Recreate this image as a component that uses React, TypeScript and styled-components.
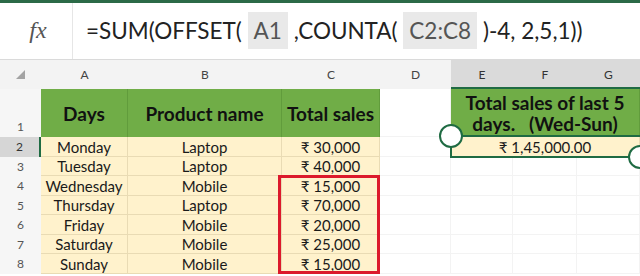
import React from "react";
import styled, { createGlobalStyle, css } from "styled-components";

const Global = createGlobalStyle`
  html, body { margin: 0; padding: 0; background: #ffffff; }
  body { width: 640px; height: 276px; overflow: hidden; font-family: Lato, "Noto Sans", "DejaVu Sans", sans-serif; }
`;

const Page = styled.div`
  width: 640px;
  height: 276px;
  display: flex;
  flex-direction: column;
  background: #fff;
`;

const TopStrip = styled.div`
  height: 3px;
  background: #2b6a47;
`;

const FormulaBar = styled.div`
  height: 56px;
  display: flex;
  border-bottom: 1px solid #dadada;
  background: #fff;
`;

const FxBox = styled.div`
  width: 73px;
  border-right: 1px solid #e6e6e6;
  display: flex;
  align-items: center;
  justify-content: center;
  font-family: "Liberation Serif", serif;
  font-style: italic;
  font-size: 24px;
  color: #555;
  padding: 0 0 2px 4px;
  box-sizing: border-box;
`;

const FormulaText = styled.div`
  flex: 1;
  display: flex;
  align-items: center;
  padding-left: 13px;
  font-size: 22.5px;
  color: #222;
  white-space: pre;
  padding-bottom: 2px;
`;

const Ref = styled.span`
  display: inline-flex;
  align-items: center;
  height: 37px;
  padding: 0 6px;
  background: #e9e9e9;
  color: #555;
`;

const Sheet = styled.div`
  position: relative;
  display: grid;
  grid-template-columns: 41px 87px 154px 98px 71px 62px 64px 63px;
  grid-template-rows: 29px 48px repeat(7, 19.5px);
`;

const Corner = styled.div`
  background: #f3f3f3;
  position: relative;
  display: flex;
  align-items: flex-end;
  padding: 0 0 10px 16px;
  box-sizing: border-box;
`;

const ColHead = styled.div<{ $sel?: boolean }>`
  display: flex;
  align-items: center;
  justify-content: center;
  font-size: 12px;
  color: #444;
  box-sizing: border-box;
  background: #f3f3f3;
  ${(p) =>
    p.$sel &&
    css`
      background: #dadada;
      border-bottom: 2px solid #1f6b43;
      padding-top: 2px;
      color: #333;
    `}
`;

const RowHead = styled.div<{ $sel?: boolean; $bottom?: boolean }>`
  display: flex;
  justify-content: center;
  align-items: ${(p) => (p.$bottom ? "flex-end" : "center")};
  padding-bottom: ${(p) => (p.$bottom ? "3px" : "0")};
  font-size: 12px;
  color: #555;
  background: #f6f6f6;
  box-sizing: border-box;
  ${(p) =>
    p.$sel &&
    css`
      background: #d6d6d6;
      border-right: 2px solid #1f6b43;
      color: #333;
    `}
`;

type Kind = "head" | "data" | "blank";

const Cell = styled.div<{ $kind: Kind; $span?: number }>`
  box-sizing: border-box;
  display: flex;
  align-items: center;
  justify-content: center;
  text-align: center;
  white-space: pre;
  grid-column: span ${(p) => p.$span ?? 1};
  ${(p) =>
    p.$kind === "head" &&
    css`
      background: #70ad47;
      border-right: 1px solid #619c3c;
      font-weight: 700;
      font-size: 19px;
      line-height: 21px;
      color: #111;
    `}
  ${(p) =>
    p.$kind === "data" &&
    css`
      background: #fff2cc;
      border-right: 1px solid #e9dbb4;
      border-bottom: 1px solid #e9dbb4;
      font-size: 15px;
      color: #1a1a1a;
      padding-top: 1px;
    `}
  ${(p) =>
    p.$kind === "blank" &&
    css`
      background: #fff;
      border-right: 1px solid #f3f3f3;
      border-bottom: 1px solid #f3f3f3;
    `}
`;

const RedBox = styled.div`
  position: absolute;
  left: 278px;
  top: 114.5px;
  width: 102px;
  height: 99px;
  border: 3px solid #dc1a2c;
  box-sizing: border-box;
  pointer-events: none;
`;

const Selection = styled.div`
  position: absolute;
  left: 450px;
  top: 75px;
  width: 200px;
  height: 23px;
  border: 2px solid #1f6b43;
  box-sizing: border-box;
`;

const Handle = styled.div<{ $x: number; $y: number }>`
  position: absolute;
  left: ${(p) => p.$x - 12}px;
  top: ${(p) => p.$y - 12}px;
  width: 24px;
  height: 24px;
  border-radius: 50%;
  background: #fff;
  border: 2.5px solid #1f6b43;
  box-sizing: border-box;
`;

const data = [
  ["Monday", "Laptop", "₹ 30,000"],
  ["Tuesday", "Laptop", "₹ 40,000"],
  ["Wednesday", "Mobile", "₹ 15,000"],
  ["Thursday", "Laptop", "₹ 70,000"],
  ["Friday", "Mobile", "₹ 20,000"],
  ["Saturday", "Mobile", "₹ 25,000"],
  ["Sunday", "Mobile", "₹ 15,000"],
];

export default function App() {
  return (
    <Page>
      <Global />
      <TopStrip />
      <FormulaBar>
        <FxBox>fx</FxBox>
        <FormulaText>
          {"=SUM(OFFSET( "}
          <Ref>A1</Ref>
          {" ,COUNTA( "}
          <Ref>C2:C8</Ref>
          {" )-4, 2,5,1))"}
        </FormulaText>
      </FormulaBar>
      <Sheet>
        <Corner>
          <svg width="9" height="9" viewBox="0 0 9 9">
            <polygon points="9,0 9,9 0,9" fill="#a3a3a3" />
          </svg>
        </Corner>
        {["A", "B", "C", "D"].map((c) => (
          <ColHead key={c}>{c}</ColHead>
        ))}
        {["E", "F", "G"].map((c) => (
          <ColHead key={c} $sel>
            {c}
          </ColHead>
        ))}

        <RowHead $bottom>1</RowHead>
        <Cell $kind="head">Days</Cell>
        <Cell $kind="head">Product name</Cell>
        <Cell $kind="head">Total sales</Cell>
        <Cell $kind="blank" />
        <Cell $kind="head" $span={3}>
          {"Total sales of last 5\ndays.   (Wed-Sun)"}
        </Cell>

        {data.map((row, i) => (
          <React.Fragment key={i}>
            <RowHead $sel={i === 0}>{i + 2}</RowHead>
            {row.map((v, j) => (
              <Cell key={j} $kind="data">
                {v}
              </Cell>
            ))}
            <Cell $kind="blank" />
            {i === 0 ? (
              <Cell $kind="data" $span={3}>
                ₹ 1,45,000.00
              </Cell>
            ) : (
              <>
                <Cell $kind="blank" />
                <Cell $kind="blank" />
                <Cell $kind="blank" />
              </>
            )}
          </React.Fragment>
        ))}

        <RedBox />
        <Selection />
        <Handle $x={451} $y={76} />
        <Handle $x={640} $y={97} />
      </Sheet>
    </Page>
  );
}
